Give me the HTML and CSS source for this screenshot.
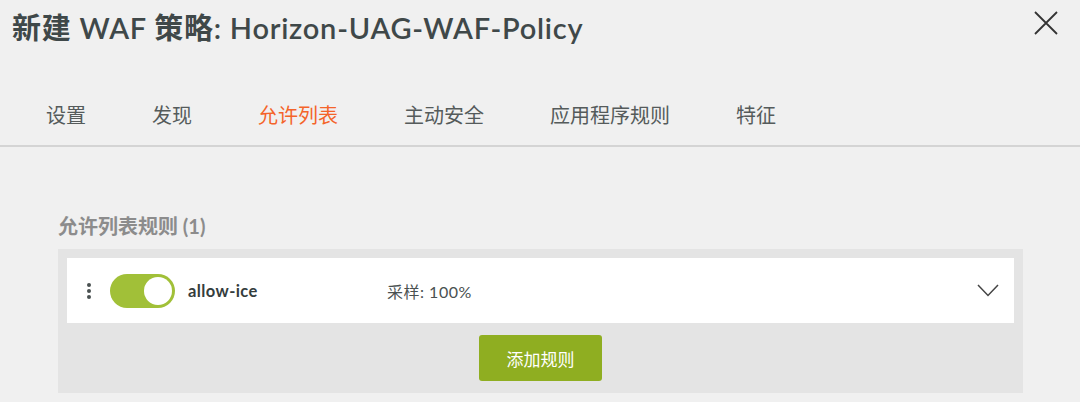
FILE: index.html
```html
<!DOCTYPE html>
<html lang="zh-CN">
<head>
<meta charset="utf-8">
<title>新建 WAF 策略</title>
<link rel="stylesheet" href="styles.css">
</head>
<body>
<div class="modal">
  <header class="modal-header">
    <h1 class="modal-title">新建 WAF 策略: Horizon-UAG-WAF-Policy</h1>
    <button class="close-btn" aria-label="关闭">
      <svg width="24" height="24" viewBox="0 0 24 24"><path d="M1 1 L23 23 M23 1 L1 23" stroke="#333" stroke-width="1.8" fill="none"/></svg>
    </button>
  </header>
  <nav class="tabs">
    <span class="tab">设置</span>
    <span class="tab">发现</span>
    <span class="tab active">允许列表</span>
    <span class="tab">主动安全</span>
    <span class="tab">应用程序规则</span>
    <span class="tab">特征</span>
  </nav>
  <section class="content">
    <h2 class="section-title">允许列表规则 (1)</h2>
    <div class="rules-box">
      <div class="rule-card">
        <span class="kebab"><i></i><i></i><i></i></span>
        <span class="toggle"><span class="knob"></span></span>
        <span class="rule-name">allow-ice</span>
        <span class="rule-sample">采样: 100%</span>
        <svg class="chevron" width="22" height="13" viewBox="0 0 22 13"><path d="M1 1 L11 11.5 L21 1" stroke="#444" stroke-width="1.5" fill="none"/></svg>
      </div>
      <div class="actions">
        <button class="add-btn">添加规则</button>
      </div>
    </div>
  </section>
</div>
</body>
</html>
```

FILE: styles.css
```css
html, body {
  margin: 0;
  padding: 0;
  background: #f0f0f0;
}
body {
  font-family: "Lato", "Noto Sans CJK SC", sans-serif;
  color: #3f4848;
  width: 1080px;
  height: 402px;
  overflow: hidden;
}
.modal-header {
  display: flex;
  justify-content: space-between;
  align-items: flex-start;
  padding: 10px 22px 0 12px;
}
.modal-title {
  margin: 0;
  font-size: 29px;
  line-height: 36px;
  font-weight: 600;
  letter-spacing: 0.75px;
  color: #3f4849;
}
.close-btn {
  border: 0;
  background: none;
  padding: 0;
  margin-top: 1px;
  width: 24px;
  height: 24px;
  cursor: pointer;
}
.close-btn svg { display: block; }
.tabs {
  display: flex;
  gap: 66px;
  padding: 57px 0 18px 46px;
  border-bottom: 2px solid #d4d4d4;
}
.tab {
  font-size: 20px;
  line-height: 24px;
  color: #555b5b;
}
.tab.active {
  color: #f4642a;
}
.content {
  padding: 0 57px 0 58px;
}
.section-title {
  margin: 67px 0 11px;
  font-size: 20px;
  line-height: 24px;
  font-weight: 700;
  color: #8c8c8c;
}
.rules-box {
  background: #e4e4e4;
  padding: 9px 9px 12px;
}
.rule-card {
  background: #fff;
  height: 65px;
  display: flex;
  align-items: center;
  padding: 0 15px 0 20px;
}
.kebab {
  display: flex;
  flex-direction: column;
  gap: 2px;
  width: 4px;
}
.kebab i {
  display: block;
  width: 4px;
  height: 4px;
  border-radius: 50%;
  background: #4a5151;
}
.toggle {
  margin-left: 19px;
  width: 65px;
  height: 34px;
  border-radius: 17px;
  background: #a1c038;
  display: flex;
  align-items: center;
  justify-content: flex-end;
  padding: 0 3px;
  box-sizing: border-box;
}
.knob {
  width: 28px;
  height: 28px;
  border-radius: 50%;
  background: #fff;
}
.rule-name {
  margin-left: 13px;
  width: 199px;
  font-size: 16.5px;
  font-weight: 700;
  letter-spacing: 0.4px;
  color: #343d3d;
}
.rule-sample {
  font-size: 16px;
  letter-spacing: 0.5px;
  color: #4a5151;
  flex: 1;
}
.chevron {
  display: block;
}
.actions {
  display: flex;
  justify-content: center;
  padding-top: 12px;
}
.add-btn {
  width: 123px;
  height: 46px;
  border: 0;
  border-radius: 3px;
  background: #8fae21;
  color: #fff;
  font-family: "Lato", "Noto Sans CJK SC", sans-serif;
  font-size: 17px;
  cursor: pointer;
}
```
